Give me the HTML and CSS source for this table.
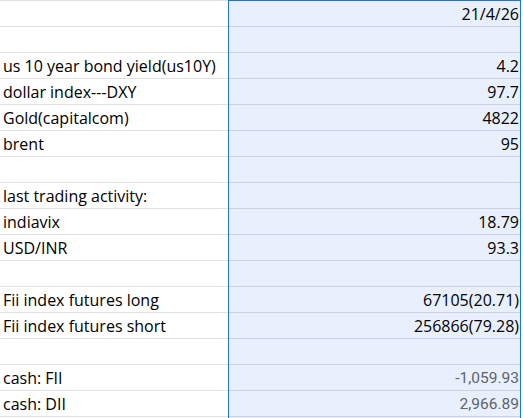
FILE: index.html
```html
<!DOCTYPE html>
<html>
<head>
<meta charset="utf-8">
<link rel="stylesheet" href="styles.css">
</head>
<body>
<div class="sheet">
  <div class="col col-labels">
    <div class="cell"></div>
    <div class="cell"></div>
    <div class="cell">us 10 year bond yield(us10Y)</div>
    <div class="cell">dollar index---DXY</div>
    <div class="cell">Gold(capitalcom)</div>
    <div class="cell">brent</div>
    <div class="cell"></div>
    <div class="cell">last trading activity:</div>
    <div class="cell">indiavix</div>
    <div class="cell">USD/INR</div>
    <div class="cell"></div>
    <div class="cell">Fii index futures long</div>
    <div class="cell">Fii index futures short</div>
    <div class="cell"></div>
    <div class="cell">cash: FII</div>
    <div class="cell">cash: DII</div>
    <div class="cell"></div>
  </div>
  <div class="col col-values">
    <div class="cell">21/4/26</div>
    <div class="cell"></div>
    <div class="cell">4.2</div>
    <div class="cell">97.7</div>
    <div class="cell">4822</div>
    <div class="cell">95</div>
    <div class="cell"></div>
    <div class="cell"></div>
    <div class="cell">18.79</div>
    <div class="cell">93.3</div>
    <div class="cell"></div>
    <div class="cell">67105(20.71)</div>
    <div class="cell">256866(79.28)</div>
    <div class="cell"></div>
    <div class="cell num">-1,059.93</div>
    <div class="cell num">2,966.89</div>
    <div class="cell"></div>
  </div>
</div>
</body>
</html>
```

FILE: styles.css
```css
html, body {
  margin: 0;
  padding: 0;
  background: #ffffff;
}
.sheet {
  display: flex;
  align-items: flex-start;
  font-family: "Open Sans", "Noto Sans", sans-serif;
  font-size: 16px;
  color: #000000;
  height: 418px;
  overflow: hidden;
}
.col {
  display: flex;
  flex-direction: column;
}
.col-labels {
  width: 228px;
  border-top: 1px solid #e1e1e1;
}
.col-values {
  width: 291px;
  background: #e8f0fe;
  border-top: 1px solid #1a73e8;
  border-left: 1px solid #1a73e8;
  border-right: 1px solid #1a73e8;
}
.cell {
  height: 25px;
  line-height: 26px;
  white-space: nowrap;
  overflow: hidden;
  box-sizing: content-box;
}
.col-labels .cell {
  border-bottom: 1px solid #e1e1e1;
  padding-left: 3px;
}
.col-values .cell {
  border-bottom: 1px solid #c8d2e4;
  text-align: right;
  padding-right: 1px;
}
.col-values .cell.num {
  font-family: Roboto, "Noto Sans", sans-serif;
  color: #5f6368;
  font-size: 15.5px;
  line-height: 27px;
}
```
